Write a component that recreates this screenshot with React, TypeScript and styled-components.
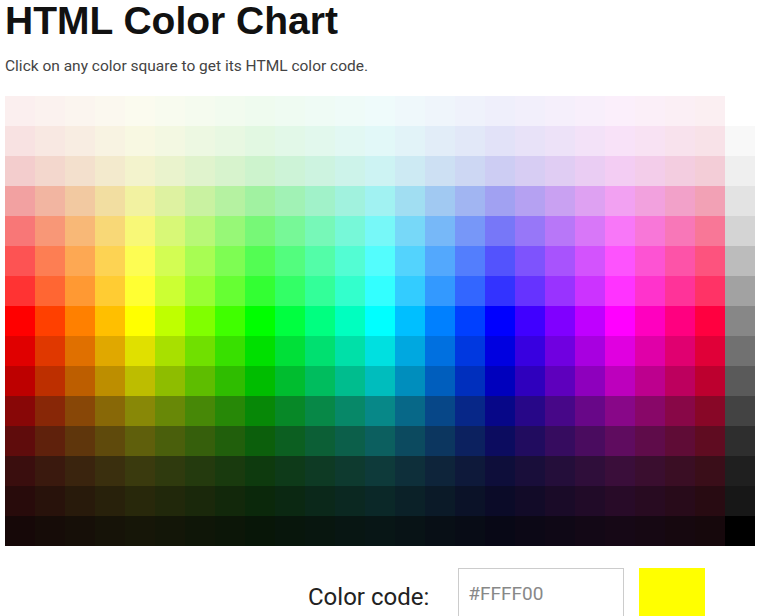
import { createGlobalStyle, styled } from "styled-components";

const GlobalStyle = createGlobalStyle`
    html, body {
        margin: 0;
        padding: 0;
        background: #ffffff;
    }
    body {
        font-family: Roboto, "Liberation Sans", Arial, sans-serif;
        overflow: hidden;
    }
`;

const Page = styled.main`
    padding: 0 5px;
`;

const Title = styled.h1`
    margin: 0;
    font-family: "Liberation Sans", Arial, sans-serif;
    font-size: 39px;
    font-weight: bold;
    color: #111111;
    line-height: 42px;
`;

const Intro = styled.p`
    margin: 14px 0 0;
    font-size: 15.5px;
    line-height: 20px;
    color: #444444;
`;

const Chart = styled.div`
    display: grid;
    grid-template-columns: repeat(25, 30px);
    grid-auto-rows: 30px;
    margin-top: 20px;
    width: 750px;
`;

const Square = styled.div`
    cursor: pointer;
`;

const Controls = styled.div`
    display: flex;
    align-items: flex-start;
    margin: 22px 0 0 303px;
`;

const Label = styled.label`
    font-size: 24px;
    color: #222222;
    margin-top: 15px;
    margin-right: 29px;
`;

const CodeInput = styled.input`
    box-sizing: border-box;
    width: 166px;
    height: 60px;
    padding: 0 0 10px 9px;
    border: 1px solid #cccccc;
    font-family: Roboto, "Liberation Sans", Arial, sans-serif;
    font-size: 19px;
    color: #888888;
    outline: none;
`;

const Preview = styled.div<{ $color: string }>`
    width: 66px;
    height: 60px;
    margin-left: 15px;
    background: ${(p) => p.$color};
`;

// lightness / saturation for each row, top to bottom
const rows: [number, number][] = [
    [96, 60],
    [93, 60],
    [88, 62],
    [79, 75],
    [72, 90],
    [66, 98],
    [60, 100],
    [50, 100],
    [44, 100],
    [37, 100],
    [28, 90],
    [21, 78],
    [14, 62],
    [10, 55],
    [6, 45],
];

const grays = [
    "#ffffff", "#f8f8f8", "#efefef", "#e3e3e3", "#d4d4d4",
    "#bcbcbc", "#a2a2a2", "#878787", "#717171", "#5a5a5a",
    "#434343", "#2e2e2e", "#1f1f1f", "#171717", "#000000",
];

const hues = Array.from({ length: 24 }, (_, i) => i * 15);

export default function App() {
    return (
        <>
            <GlobalStyle />
            <Page>
                <Title>HTML Color Chart</Title>
                <Intro>Click on any color square to get its HTML color code.</Intro>
                <Chart>
                    {rows.flatMap(([l, s], r) => [
                        ...hues.map((h) => (
                            <Square
                                key={`${r}-${h}`}
                                style={{ background: `hsl(${h}, ${s}%, ${l}%)` }}
                            />
                        )),
                        <Square key={`${r}-gray`} style={{ background: grays[r] }} />,
                    ])}
                </Chart>
                <Controls>
                    <Label htmlFor="code">Color code:</Label>
                    <CodeInput id="code" defaultValue="#FFFF00" />
                    <Preview $color="#ffff00" />
                </Controls>
            </Page>
        </>
    );
}
